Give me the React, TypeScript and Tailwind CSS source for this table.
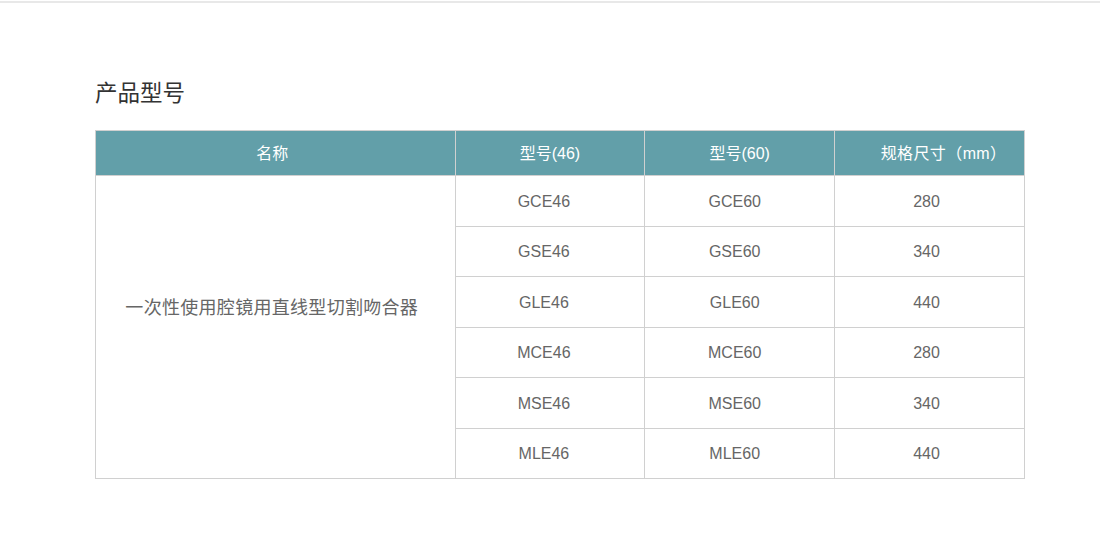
const rows = [
	{ m46: "GCE46", m60: "GCE60", size: "280" },
	{ m46: "GSE46", m60: "GSE60", size: "340" },
	{ m46: "GLE46", m60: "GLE60", size: "440" },
	{ m46: "MCE46", m60: "MCE60", size: "280" },
	{ m46: "MSE46", m60: "MSE60", size: "340" },
	{ m46: "MLE46", m60: "MLE60", size: "440" },
];

const font = {
	fontFamily: '"Liberation Sans", "Noto Sans CJK SC", sans-serif',
};

export default function App() {
	return (
		<div className="w-[1100px] h-[543px] bg-white" style={font}>
			<div className="h-px" />
			<div className="h-[2px] bg-[#e8e8e8]" />
			<div className="px-[95px] pt-[76px]">
				<h2 className="text-[22.5px] leading-[30px] text-[#333]">产品型号</h2>
				<table className="mt-[21px] w-[930px] border-collapse text-[16px] text-center">
					<thead>
						<tr className="h-[45px] bg-[#629fa9] text-white">
							<th className="w-[360px] border border-[#d0d0d0] font-normal pr-[6px] pt-[2px]">名称</th>
							<th className="w-[190px] border border-[#d0d0d0] font-normal pt-[2px]">型号(46)</th>
							<th className="w-[190px] border border-[#d0d0d0] font-normal pt-[2px]">型号(60)</th>
							<th className="w-[190px] border border-[#d0d0d0] font-normal pl-[28px] pt-[2px] tracking-[0.4px]">
								规格尺寸（mm）
							</th>
						</tr>
					</thead>
					<tbody className="text-[#666]">
						{rows.map((r, i) => (
							<tr key={r.m46} className="h-[50.5px]">
								{i === 0 && (
									<td
										rowSpan={rows.length}
										className="border border-[#d0d0d0] text-[18px] tracking-[0.3px] pr-[7px] pb-[38px]"
									>
										一次性使用腔镜用直线型切割吻合器
									</td>
								)}
								<td className="border border-[#d0d0d0] pr-[12px] pt-[2px]">{r.m46}</td>
								<td className="border border-[#d0d0d0] pr-[10px] pt-[2px]">{r.m60}</td>
								<td className="border border-[#d0d0d0] pr-[6px] pt-[2px]">{r.size}</td>
							</tr>
						))}
					</tbody>
				</table>
			</div>
		</div>
	);
}
